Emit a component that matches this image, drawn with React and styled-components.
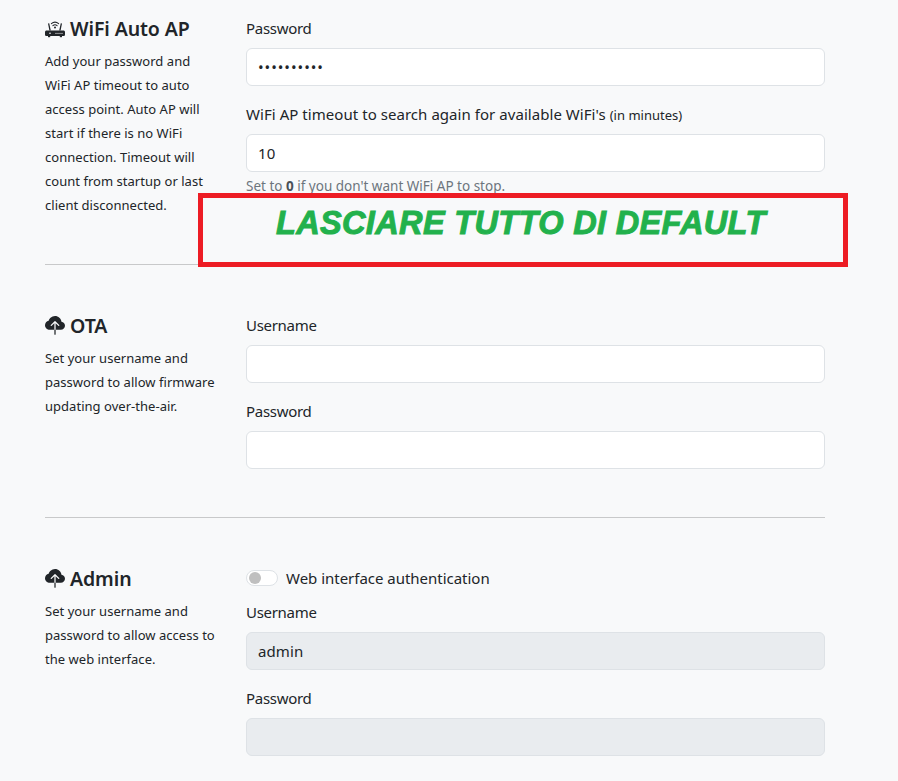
import React from "react";
import styled, { createGlobalStyle } from "styled-components";
import { BsCloudUploadFill } from "react-icons/bs";

const GlobalStyle = createGlobalStyle`
  html, body {
    margin: 0;
    padding: 0;
    background: #f8f9fa;
  }
  body {
    font-family: "Noto Sans", "Open Sans", sans-serif;
    font-size: 15px;
    line-height: 24px;
    color: #212529;
  }
  * {
    box-sizing: border-box;
  }
`;

const Page = styled.div`
  position: relative;
  width: 898px;
  height: 781px;
  overflow: hidden;
  padding: 16px 73px 0 45px;
`;

const Section = styled.section`
  display: grid;
  grid-template-columns: 201px 579px;
`;

const Side = styled.div`
  padding-top: 1px;
  margin-bottom: -1px;
`;

const Heading = styled.h2`
  display: flex;
  align-items: center;
  gap: 5px;
  margin: 0 0 8px;
  font-size: 19.5px;
  line-height: 24px;
  font-weight: 600;
  letter-spacing: -0.1px;
  svg {
    flex: none;
    width: 20px;
    height: 20px;
  }
`;

const Description = styled.p`
  margin: 0;
  width: 173px;
  font-size: 13px;
  line-height: 24px;
  letter-spacing: 0.03px;
`;

const Fields = styled.div`
  display: flex;
  flex-direction: column;
`;

const Label = styled.label`
  display: block;
  margin-bottom: 8px;
  font-size: 15px;
  letter-spacing: ${(p) => (p.$long ? "0.05px" : "-0.3px")};
  small {
    font-size: 13px;
    line-height: 1;
    letter-spacing: 0;
  }
`;

const Input = styled.input`
  display: block;
  width: 100%;
  height: 38px;
  margin-bottom: 16px;
  padding: 6px 11px;
  border: 1px solid #dee2e6;
  border-radius: 6px;
  background: ${(p) => (p.disabled ? "#e9ecef" : "#fff")};
  color: #212529;
  font-family: inherit;
  font-size: 15px;
  letter-spacing: ${(p) => (p.type === "password" ? "0.95px" : "0.1px")};
  opacity: 1;
  &:last-child {
    margin-bottom: 0;
  }
`;

const Help = styled.div`
  margin-top: -12px;
  font-size: 13.5px;
  line-height: 21px;
  color: #6c757d;
  b {
    color: #495057;
  }
`;

const Divider = styled.hr`
  height: 1px;
  margin: 48px 0;
  border: 0;
  background: #c8c9ca;
`;

const SwitchRow = styled.div`
  display: flex;
  align-items: center;
  gap: 8px;
  height: 24px;
  margin-bottom: 10px;
  font-size: 15px;
  letter-spacing: -0.02px;
`;

const Switch = styled.span`
  display: flex;
  align-items: center;
  width: 32px;
  height: 16px;
  padding: 1px 2px;
  border: 1px solid #dee2e6;
  border-radius: 8px;
  background: #fff;
  &::before {
    content: "";
    width: 12px;
    height: 12px;
    border-radius: 50%;
    background: #bfbfbf;
  }
`;

const Notice = styled.div`
  position: absolute;
  left: 198px;
  top: 193px;
  width: 650px;
  height: 74px;
  padding: 0 0 14px 73px;
  border: 5px solid #ed1c24;
  background: #f8f9fa;
  display: flex;
  align-items: center;
  font-family: "Liberation Sans", Arial, sans-serif;
  font-size: 32.5px;
  font-weight: 700;
  font-style: italic;
  color: #22b14c;
  -webkit-text-stroke: 1px #22b14c;
  letter-spacing: 0.35px;
  white-space: nowrap;
`;

const RouterIcon = () => (
  <svg viewBox="0 0 20 20" fill="#212529">
    <path d="M1.6 11.5h16.8c.9 0 1.6.7 1.6 1.6v2.4c0 .9-.7 1.6-1.6 1.6H1.6C.7 17.1 0 16.4 0 15.5v-2.4c0-.9.7-1.6 1.6-1.6z" />
    <rect x="3" y="17" width="2.2" height="1.2" />
    <rect x="14.8" y="17" width="2.2" height="1.2" />
    <g fill="#fff">
      <circle cx="5" cy="14.3" r=".8" />
      <circle cx="11" cy="14.3" r=".6" />
      <circle cx="13" cy="14.3" r=".6" />
      <circle cx="15" cy="14.3" r=".6" />
      <circle cx="17" cy="14.3" r=".6" />
    </g>
    <path d="M3 4.5l1.2-.3 1.6 7.3H4.4zM17 4.5l-1.2-.3-1.6 7.3h1.4z" />
    <g fill="none" stroke="#212529" strokeWidth="1.1" strokeLinecap="round">
      <path d="M6.4 4.6c2.1-1.7 5.1-1.7 7.2 0" />
      <path d="M7.9 6.6c1.2-1 3-1 4.2 0" />
    </g>
    <circle cx="10" cy="8.5" r="1" />
  </svg>
);

const App = () => (
  <Page>
    <GlobalStyle />
    <Section>
      <Side>
        <Heading>
          <RouterIcon />
          WiFi Auto AP
        </Heading>
        <Description>
          Add your password and WiFi AP timeout to auto access point. Auto AP
          will start if there is no WiFi connection. Timeout will count from
          startup or last client disconnected.
        </Description>
      </Side>
      <Fields>
        <Label>Password</Label>
        <Input type="password" defaultValue="1234567890" />
        <Label $long>
          WiFi AP timeout to search again for available WiFi's{" "}
          <small>(in minutes)</small>
        </Label>
        <Input type="text" defaultValue="10" />
        <Help>
          Set to <b>0</b> if you don't want WiFi AP to stop.
        </Help>
      </Fields>
    </Section>
    <Divider />
    <Section>
      <Side>
        <Heading>
          <BsCloudUploadFill />
          OTA
        </Heading>
        <Description>
          Set your username and password to allow firmware updating
          over-the-air.
        </Description>
      </Side>
      <Fields>
        <Label>Username</Label>
        <Input type="text" />
        <Label>Password</Label>
        <Input type="password" />
      </Fields>
    </Section>
    <Divider />
    <Section>
      <Side>
        <Heading>
          <BsCloudUploadFill />
          Admin
        </Heading>
        <Description>
          Set your username and password to allow access to the web interface.
        </Description>
      </Side>
      <Fields>
        <SwitchRow>
          <Switch />
          Web interface authentication
        </SwitchRow>
        <Label>Username</Label>
        <Input type="text" defaultValue="admin" disabled />
        <Label>Password</Label>
        <Input type="password" disabled />
      </Fields>
    </Section>
    <Notice>LASCIARE TUTTO DI DEFAULT</Notice>
  </Page>
);

export default App;
